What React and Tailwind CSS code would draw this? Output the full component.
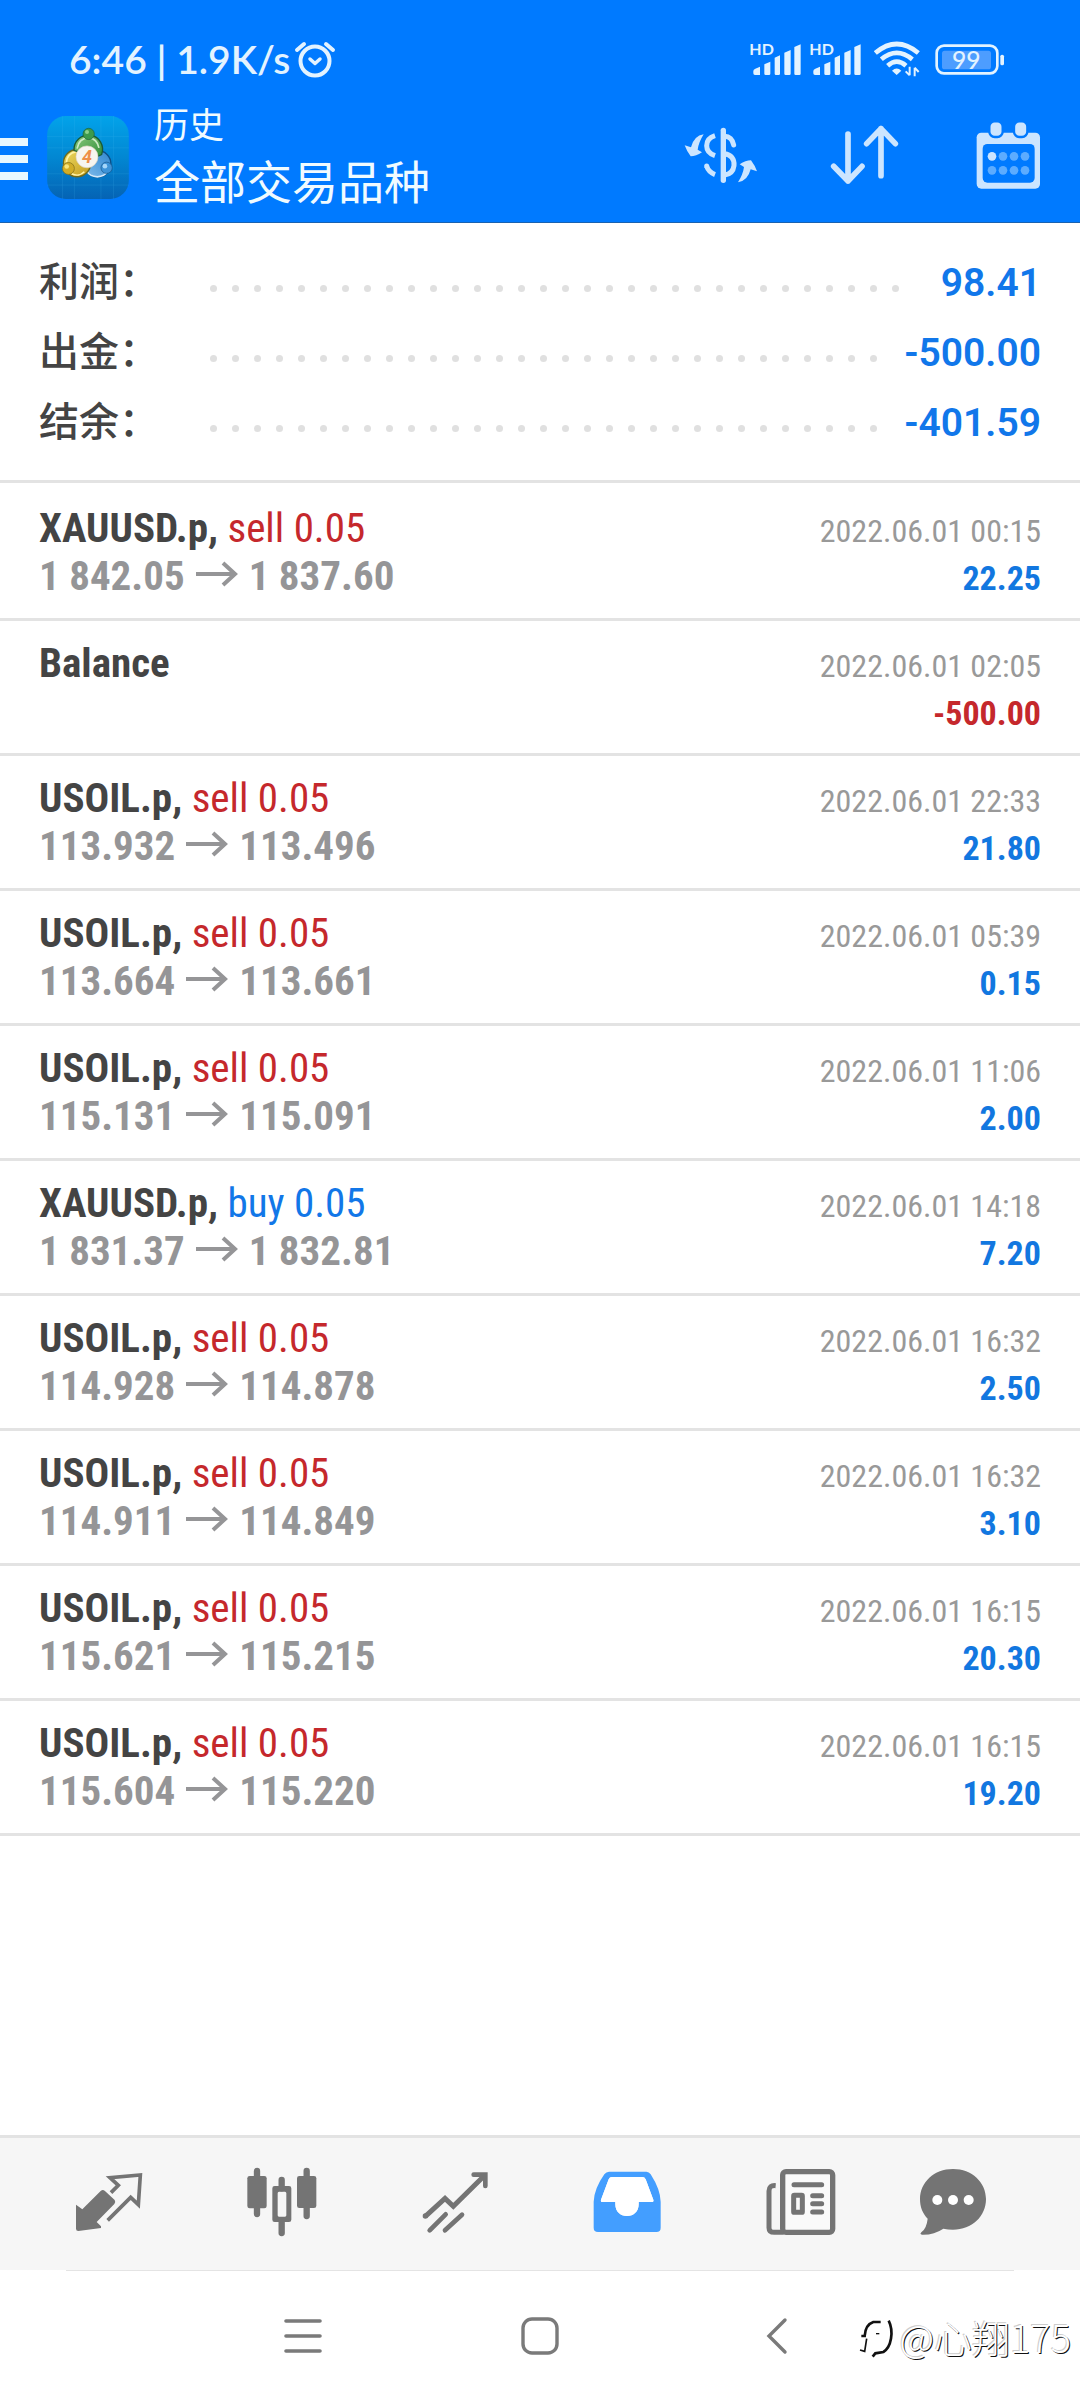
const summary = [
  { label: "利润：", value: "98.41" },
  { label: "出金：", value: "-500.00" },
  { label: "结余：", value: "-401.59" },
];

const deals = [
  { symbol: "XAUUSD.p", side: "sell", volume: "0.05", open: "1 842.05", close: "1 837.60", time: "2022.06.01 00:15", profit: "22.25" },
  { symbol: "Balance", time: "2022.06.01 02:05", profit: "-500.00" },
  { symbol: "USOIL.p", side: "sell", volume: "0.05", open: "113.932", close: "113.496", time: "2022.06.01 22:33", profit: "21.80" },
  { symbol: "USOIL.p", side: "sell", volume: "0.05", open: "113.664", close: "113.661", time: "2022.06.01 05:39", profit: "0.15" },
  { symbol: "USOIL.p", side: "sell", volume: "0.05", open: "115.131", close: "115.091", time: "2022.06.01 11:06", profit: "2.00" },
  { symbol: "XAUUSD.p", side: "buy", volume: "0.05", open: "1 831.37", close: "1 832.81", time: "2022.06.01 14:18", profit: "7.20" },
  { symbol: "USOIL.p", side: "sell", volume: "0.05", open: "114.928", close: "114.878", time: "2022.06.01 16:32", profit: "2.50" },
  { symbol: "USOIL.p", side: "sell", volume: "0.05", open: "114.911", close: "114.849", time: "2022.06.01 16:32", profit: "3.10" },
  { symbol: "USOIL.p", side: "sell", volume: "0.05", open: "115.621", close: "115.215", time: "2022.06.01 16:15", profit: "20.30" },
  { symbol: "USOIL.p", side: "sell", volume: "0.05", open: "115.604", close: "115.220", time: "2022.06.01 16:15", profit: "19.20" },
];

function AlarmIcon() {
  return (
    <svg className="h-[38px] w-[42px]" viewBox="294 40 42 38" fill="none" stroke="currentColor" strokeWidth="4" strokeLinecap="round" strokeLinejoin="round">
      <circle cx="315" cy="61" r="14.5" />
      <path d="M297 50l7-6M326 44l7 6" />
      <path d="M310 59l5 4.5 5-4.5" strokeWidth="3.5" />
    </svg>
  );
}

function SignalIcon() {
  return (
    <svg className="h-[42px] w-[54px]" viewBox="324 114 162 126" fill="currentColor">
      <text x="328" y="165" fontSize="48" fontWeight="700" fontFamily="Lato, sans-serif">HD</text>
      <path d="M340 213q0-4 6-7l14-6v25h-15q-5 0-5-5zM373 193l18-8v36q0 4-4 4h-10q-4 0-4-4zM404 173l16-7v55q0 4-4 4h-8q-4 0-4-4zM433 158l19-8v71q0 4-4 4h-11q-4 0-4-4zM463 141l19-8v88q0 4-4 4h-11q-4 0-4-4z" />
    </svg>
  );
}

function WifiIcon() {
  return (
    <svg className="h-[36px] w-[46px]" viewBox="702 126 138 108" fill="none" stroke="currentColor" strokeWidth="14">
      <path d="M706 162Q770 108 835 162" />
      <path d="M724 181Q770 142 817 181" />
      <path d="M743 200Q770 176 798 200" />
      <path d="M756 215q14-13 28 0l-14 13z" fill="currentColor" stroke="none" />
      <path d="M809 203v26M797 217l12 12M824 232v-26M836 219l-12-13" strokeWidth="6" />
    </svg>
  );
}

function BatteryIcon() {
  return (
    <svg className="h-[31px] w-[70px]" viewBox="884 130 210 93" fill="currentColor">
      <rect x="905" y="150" width="147" height="56" rx="8" fill="#4d9dff" />
      <rect x="889" y="135" width="182" height="83" rx="22" fill="none" stroke="currentColor" strokeWidth="8" />
      <rect x="1080" y="162" width="11" height="32" rx="5" />
      <text x="978" y="205" fontSize="74" fontWeight="500" textAnchor="middle" fontFamily="Lato, sans-serif">99</text>
    </svg>
  );
}

function AppLogo() {
  return (
    <svg className="h-[83px] w-[82px]" viewBox="22 32 246 250" role="img" aria-label="MetaTrader 4">
      <defs>
        <linearGradient id="tile" x1="0" y1="0" x2="0" y2="1">
          <stop offset="0" stopColor="#02a3ea" />
          <stop offset="0.5" stopColor="#0287d2" />
          <stop offset="1" stopColor="#0563b4" />
        </linearGradient>
        <linearGradient id="green" x1="0" y1="0" x2="1" y2="1">
          <stop offset="0" stopColor="#8ccb7e" />
          <stop offset="1" stopColor="#2c8a36" />
        </linearGradient>
        <linearGradient id="yellow" x1="0" y1="0" x2="1" y2="1">
          <stop offset="0" stopColor="#eddc62" />
          <stop offset="1" stopColor="#c39a1c" />
        </linearGradient>
        <linearGradient id="blue" x1="1" y1="0" x2="0" y2="1">
          <stop offset="0" stopColor="#2f86cf" />
          <stop offset="1" stopColor="#7fbcec" />
        </linearGradient>
      </defs>
      <rect x="22" y="32" width="246" height="250" rx="56" fill="url(#tile)" />
      <path d="M22 94H268M22 128H268M22 206H268M22 240H268M68 32V282M104 32V282M184 32V282M222 32V282" stroke="#4fc0f5" strokeWidth="1.5" opacity="0.3" />
      <circle cx="174" cy="176" r="40" fill="url(#blue)" stroke="#0d4f86" strokeWidth="4" />
      <path d="M140 196A38 38 0 0 0 206 196" fill="none" stroke="#d3eafc" strokeWidth="5" />
      <circle cx="112" cy="174" r="41" fill="url(#yellow)" stroke="#6e6a1c" strokeWidth="4" />
      <path d="M80 172A32 32 0 0 1 108 140M96 206A32 32 0 0 0 134 200" fill="none" stroke="#fff3a8" strokeWidth="5" />
      <path d="M103 136A43 43 0 1 1 186 148L160 160L118 140z" fill="url(#green)" stroke="#1b5b34" strokeWidth="4" />
      <path d="M112 130Q118 98 148 98Q172 100 178 128" fill="none" stroke="#cdeac4" strokeWidth="5" />
      <circle cx="147" cy="86" r="17" fill="#3d9a4c" stroke="#1d5f38" strokeWidth="2" />
      <circle cx="142" cy="80" r="6" fill="#8fd08d" />
      <circle cx="86" cy="190" r="18" fill="#d1ad27" stroke="#7d6a17" strokeWidth="2" />
      <circle cx="81" cy="184" r="7" fill="#f7e57c" />
      <circle cx="201" cy="188" r="17" fill="#3d93d8" stroke="#155488" strokeWidth="2" />
      <circle cx="196" cy="183" r="7" fill="#a5d6fa" />
      <circle cx="142" cy="155" r="33" fill="#f7f5ef" stroke="#ded4c2" strokeWidth="2" />
      <text x="142" y="174" fontSize="54" fontWeight="700" fontStyle="italic" textAnchor="middle" fill="#ee8f48" fontFamily="Roboto, sans-serif">4</text>
    </svg>
  );
}

function ExchangeIcon() {
  const arrow = "M75 58Q46 62 37 97L18 91Q24 108 36 124Q52 124 70 112L57 104Q60 82 75 58Z";
  return (
    <svg className="h-[56px] w-[74px]" viewBox="16 36 222 168" fill="none" stroke="currentColor" strokeWidth="15">
      <path d="M134 46V196" strokeWidth="16" strokeLinecap="round" />
      <path d="M109 62C90 68 84 78 84 92C84 106 92 116 109 122" />
      <path d="M84 154C88 166 96 174 109 179" />
      <circle cx="84" cy="153" r="7.5" fill="currentColor" stroke="none" />
      <path d="M138 64C152 64 162 74 165 90" strokeLinecap="round" />
      <path d="M138 116C156 118 168 132 166 152C164 168 154 178 138 180" />
      <path d={arrow} fill="currentColor" stroke="none" />
      <path d={arrow} fill="currentColor" stroke="none" transform="rotate(180 126.5 130)" />
    </svg>
  );
}

function SortIcon() {
  return (
    <svg className="h-[60px] w-[69px]" viewBox="572 380 207 180" fill="none" stroke="currentColor" strokeWidth="17" strokeLinecap="round" strokeLinejoin="round">
      <path d="M626 407V548M583 504L626 548L668 504" />
      <path d="M725 532V391M682 436L725 391L768 436" />
    </svg>
  );
}

function CalendarIcon() {
  return (
    <svg className="h-[67px] w-[65px]" viewBox="1008 366 195 201" fill="currentColor">
      <rect x="1010" y="398" width="190" height="168" rx="14" />
      <rect x="1028" y="432" width="156" height="116" rx="14" fill="#007aff" />
      <g stroke="#007aff" strokeWidth="7">
        <rect x="1048" y="364" width="40" height="47" rx="16" />
        <rect x="1122" y="364" width="40" height="47" rx="16" />
      </g>
      <circle cx="1056" cy="469" r="13" />
      <g fill="#5cacff">
        <circle cx="1089" cy="469" r="13" />
        <circle cx="1122" cy="469" r="13" />
        <circle cx="1155" cy="469" r="13" />
        <circle cx="1056" cy="511" r="13" />
        <circle cx="1089" cy="511" r="13" />
        <circle cx="1122" cy="511" r="13" />
        <circle cx="1155" cy="511" r="13" />
      </g>
    </svg>
  );
}

function PriceArrow() {
  return (
    <svg className="mx-[11px] inline-block h-[29px] w-[42px] align-baseline" viewBox="0 0 42 29" fill="none" stroke="currentColor" strokeWidth="4" role="img" aria-label="到">
      <path d="M0 13H38M27 2L39 13L27 24" />
    </svg>
  );
}

function QuotesIcon() {
  return (
    <svg className="h-[60px] w-[68px]" viewBox="44 66 204 180" fill="currentColor">
      <path d="M47 164L66 178L121 123Q127 118 133 122L163 150Q167 156 162 162L109 216L122 229V234L54 243Q47 243 47 236z" />
      <path d="M152 128L174 106L149 83L240 75L234 164L211 142L142 211" fill="none" stroke="currentColor" strokeWidth="11" />
    </svg>
  );
}

function ChartIcon() {
  return (
    <svg className="h-[70px] w-[72px]" viewBox="556 51 216 210" fill="currentColor">
      <path d="M589 63V192M738 63V198M663 90V115M663 212V249" stroke="currentColor" strokeWidth="19" strokeLinecap="round" />
      <rect x="560" y="78" width="58" height="97" rx="7" />
      <rect x="709" y="78" width="58" height="96" rx="7" />
      <path fillRule="evenodd" d="M642 108H685Q692 108 692 115V209Q692 216 685 216H642Q635 216 635 209V115Q635 108 642 108zM655 125Q651 125 651 130V196Q651 200 655 200H673Q677 200 677 196V130Q677 125 673 125z" />
    </svg>
  );
}

function TradeIcon() {
  return (
    <svg className="h-[63px] w-[68px]" viewBox="1080 59 204 189" fill="none" stroke="currentColor" strokeWidth="14">
      <path d="M1093 195L1152 141L1177 165L1272 71" strokeWidth="15" />
      <path d="M1238 70H1273V104M1106 237L1154 189M1152 237L1203 190" strokeLinecap="round" />
      <circle cx="1093" cy="194" r="8" fill="currentColor" stroke="none" />
    </svg>
  );
}

function HistoryIcon() {
  return (
    <svg className="h-[62px] w-[69px]" viewBox="40 60 207 186" fill="currentColor">
      <path fillRule="evenodd" d="M88 62H200Q208 62 213 70Q242 115 243 152V230Q243 243 230 243H55Q42 243 42 230V152Q44 112 74 70Q80 62 88 62zM97 78Q90 78 87 85L64 146Q62 153 69 153H107V160C107 182 122 195 142 195C162 195 177 182 177 160V153H216Q223 153 221 146L198 85Q195 78 188 78z" />
      <path d="M97 78Q90 78 87 85L64 146Q62 153 69 153H107V160C107 182 122 195 142 195C162 195 177 182 177 160V153H216Q223 153 221 146L198 85Q195 78 188 78z" fill="#fff" />
    </svg>
  );
}

function NewsIcon() {
  return (
    <svg className="h-[68px] w-[72px]" viewBox="556 51 216 204" fill="none" stroke="currentColor" strokeWidth="15">
      <rect x="609" y="62" width="150" height="182" rx="10" fill="#fafafa" strokeWidth="16" />
      <path d="M588 104Q568 102 568 120V230Q568 244 584 244H612" />
      <path d="M643 101H726M699 134H726M699 158H726M699 183H726" strokeLinecap="round" />
      <rect x="642" y="133" width="26" height="51" rx="2" fill="#fafafa" />
    </svg>
  );
}

function ChatIcon() {
  return (
    <svg className="h-[68px] w-[68px]" viewBox="1017 51 204 204" fill="currentColor">
      <path d="M1119 54C1176 54 1218 94 1218 144C1218 196 1176 236 1119 236Q1104 236 1090 233Q1062 252 1026 251Q1018 250 1024 244Q1040 232 1043 203C1028 188 1020 168 1020 144C1020 94 1062 54 1119 54z" />
      <g fill="#fff">
        <circle cx="1072" cy="147" r="15" />
        <circle cx="1119" cy="147" r="15" />
        <circle cx="1166" cy="147" r="15" />
      </g>
    </svg>
  );
}

const tabs = [
  { label: "行情", Icon: QuotesIcon },
  { label: "图表", Icon: ChartIcon },
  { label: "交易", Icon: TradeIcon },
  { label: "历史", Icon: HistoryIcon, active: true },
  { label: "新闻", Icon: NewsIcon },
  { label: "消息", Icon: ChatIcon },
];

function SummaryRow({ label, value }) {
  return (
    <div className="flex h-[70px] items-center gap-4">
      <dt className="w-[147px] shrink-0 text-[40px] font-medium text-[#444]">{label}</dt>
      <div aria-hidden="true" className="mt-3 flex h-2 flex-1 flex-wrap overflow-hidden">
        {Array.from({ length: 80 }, (_, i) => (
          <span key={i} className="flex h-4 w-[22px] justify-center">
            <span className="size-[7px] rounded-full bg-[#e0e0e0]" />
          </span>
        ))}
      </div>
      <dd className="text-[39px] font-semibold text-[#1177ea]">{value}</dd>
    </div>
  );
}

function DealRow({ deal }) {
  const sideColor = deal.side === "buy" ? "text-[#1277e8]" : "text-[#c5282c]";
  const profitColor = deal.profit.startsWith("-") ? "text-[#c5282c]" : "text-[#1277e0]";
  return (
    <li className="border-b-[3px] border-[#e3e3e3] px-[39px] py-[18px] font-['Roboto_Condensed','Roboto',sans-serif] text-[41px] leading-[48px]">
      <div className="flex h-[48px] items-baseline justify-between">
        <p className="font-bold text-[#444]">
          {deal.symbol}
          {deal.side && (
            <>
              , <span className={`font-normal ${sideColor}`}>{deal.side} {deal.volume}</span>
            </>
          )}
        </p>
        <time className="text-[32px] text-[#999]">{deal.time}</time>
      </div>
      <div className="flex h-[48px] items-baseline justify-between font-bold">
        <p className="text-[#959597]">
          {deal.open ? (
            <>
              {deal.open}
              <PriceArrow />
              {deal.close}
            </>
          ) : (
            "\u00a0"
          )}
        </p>
        <p className={`text-[34px] ${profitColor}`}>{deal.profit}</p>
      </div>
    </li>
  );
}

export default function App() {
  return (
    <div className="flex min-h-screen flex-col bg-white font-['Roboto','Noto_Sans_CJK_SC',sans-serif]">
      <header className="border-b border-[#1a62b0] bg-[#007aff]">
        <div className="flex h-[92px] items-center justify-between pt-[26px] pr-[75px] pl-[69px] text-[#e3f3ff]">
          <div className="flex items-center gap-[4px]">
            <span className="font-['Lato',sans-serif] text-[39px] leading-none font-semibold">6:46 | 1.9K/s</span>
            <AlarmIcon />
          </div>
          <div className="flex items-center">
            <div className="mr-[12px] flex gap-[6px]">
              <SignalIcon />
              <SignalIcon />
            </div>
            <div className="flex items-center gap-[15px]">
              <WifiIcon />
              <BatteryIcon />
            </div>
          </div>
        </div>
        <div className="flex h-[130px] items-center pr-[39px]">
          <button type="button" aria-label="菜单" className="mr-[19px] flex w-[28px] flex-col gap-[9px] pt-1">
            <span className="h-[8px] bg-[#e8f8ff]" />
            <span className="h-[8px] bg-[#e8f8ff]" />
            <span className="h-[8px] bg-[#e8f8ff]" />
          </button>
          <AppLogo />
          <div className="ml-[25px] flex-1 pt-1 text-[#f0fbff]">
            <h1 className="text-[35px] leading-[48px]">历史</h1>
            <p className="text-[46px] leading-[64px]">全部交易品种</p>
          </div>
          <div className="flex items-center pb-1 text-[#cce5ff]">
            <button type="button" aria-label="交易品种" className="mr-[72px]"><ExchangeIcon /></button>
            <button type="button" aria-label="排序" className="mr-[77px]"><SortIcon /></button>
            <button type="button" aria-label="日期"><CalendarIcon /></button>
          </div>
        </div>
      </header>

      <main className="flex-1">
        <dl className="border-b-[3px] border-[#e3e3e3] px-[39px] pt-[25px] pb-[22px]">
          {summary.map((row) => (
            <SummaryRow key={row.label} {...row} />
          ))}
        </dl>
        <ul className="pt-[3px]">
          {deals.map((deal, i) => (
            <DealRow key={i} deal={deal} />
          ))}
        </ul>
      </main>

      <nav className="grid h-[135px] grid-cols-[173fr_173fr_173fr_173fr_173fr_132fr] border-t-[3px] border-[#e3e3e3] bg-[#f6f6f6] pr-[61px] pb-1 pl-[22px]">
        {tabs.map(({ label, Icon, active }) => (
          <button key={label} type="button" aria-label={label} className={`flex items-center justify-center ${active ? "text-[#439eff]" : "text-[#747474]"}`}>
            <Icon />
          </button>
        ))}
      </nav>

      <footer className="relative">
        <div className="mx-[66px] h-px bg-[#e4e4e4]" />
        <div className="grid h-[129px] grid-cols-3 px-[184px] text-[#7a7a7a]">
          <button type="button" aria-label="最近任务" className="flex items-center justify-center">
            <svg className="h-[36px] w-[38px]" viewBox="0 0 38 36" stroke="currentColor" strokeWidth="3.6" strokeLinecap="round">
              <path d="M2 3H36M2 18H36M2 33H36" />
            </svg>
          </button>
          <button type="button" aria-label="主屏幕" className="flex items-center justify-center">
            <svg className="h-[38px] w-[38px]" viewBox="0 0 38 38" fill="none" stroke="currentColor" strokeWidth="3.4">
              <rect x="2" y="2" width="34" height="34" rx="9" />
            </svg>
          </button>
          <button type="button" aria-label="返回" className="flex items-center justify-center">
            <svg className="h-[38px] w-[22px]" viewBox="0 0 22 38" fill="none" stroke="currentColor" strokeWidth="3.4" strokeLinecap="round">
              <path d="M19 3L3 19L19 35" />
            </svg>
          </button>
        </div>
        <div className="absolute right-[9px] bottom-[33px] flex items-center gap-1">
          <svg className="mt-1 h-[40px] w-[36px]" viewBox="55 75 108 120" fill="none" stroke="#111">
            <path d="M62 126H72Q74 92 98 84H120" strokeWidth="8" />
            <path d="M78 134L72 172L58 168" strokeWidth="5" />
            <path d="M144 80C160 112 152 160 128 174L104 178L96 188" strokeWidth="8" />
            <path d="M106 119H116" strokeWidth="4" />
          </svg>
          <span className="font-['Noto_Sans_CJK_SC',sans-serif] text-[38px] leading-[60px] font-light text-white [text-shadow:1px_1px_0_#111,-1px_-1px_0_#ccc]">@心翔175</span>
        </div>
      </footer>
    </div>
  );
}
